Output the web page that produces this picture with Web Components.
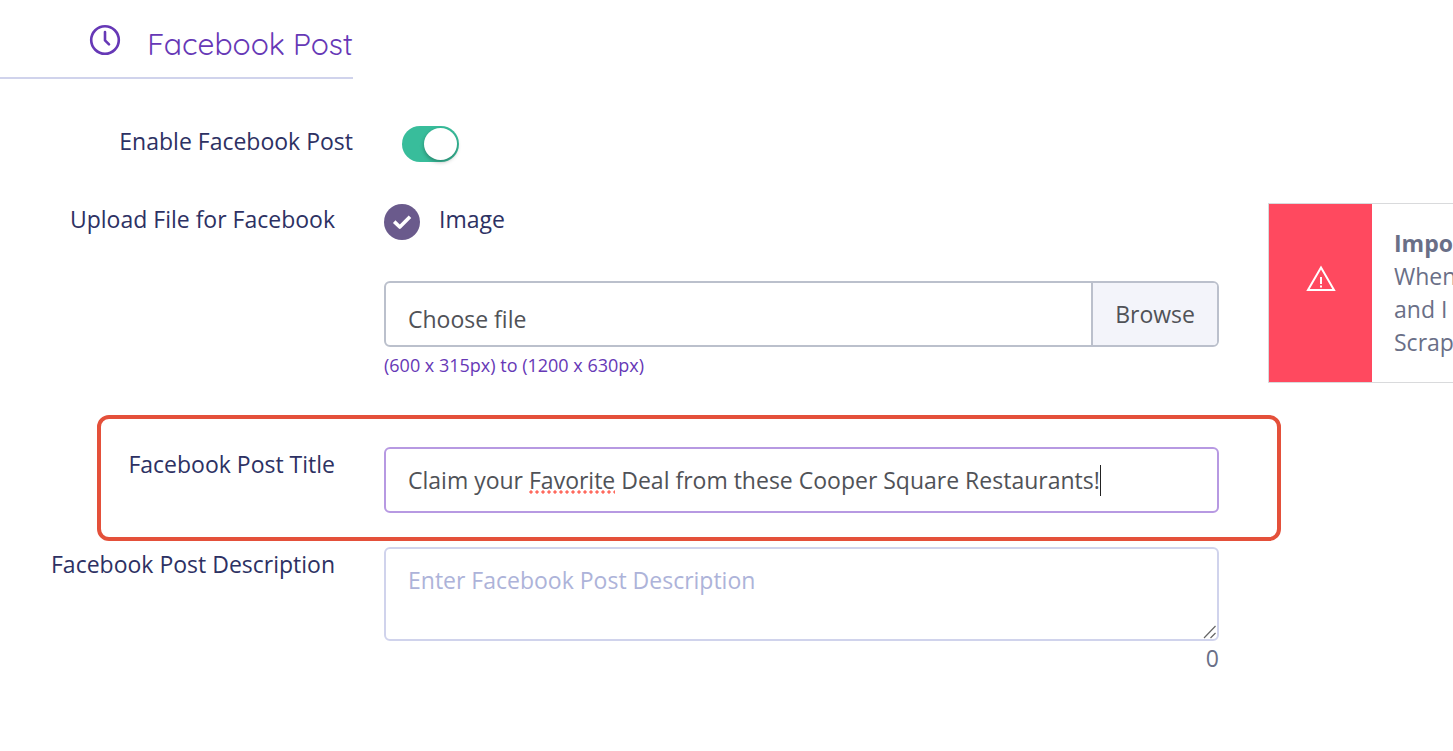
<!DOCTYPE html>
<html lang="en">
<head>
<meta charset="utf-8">
<meta name="viewport" content="width=device-width, initial-scale=1">
<title>Facebook Post</title>
<style>
  :root {
    --color-text: #2d3163;
    --color-input: #505257;
    --color-muted: #6a6f87;
    --color-primary: #6638b6;
    --color-line: #d0d3ec;
    --color-danger: #ff495f;
    --label-width: 335px;
    --gap: 49px;
  }
  body {
    margin: 0;
    overflow-x: hidden;
    background: #fff;
    color: var(--color-text);
    font-family: "Open Sans", "Noto Sans", sans-serif;
    font-size: 23px;
    line-height: 34px;
  }
</style>
</head>
<body>
<post-page>
  <section-heading>Facebook Post</section-heading>
  <toggle-row>Enable Facebook Post</toggle-row>
  <file-row option="Image" hint="(600 x 315px) to (1200 x 630px)">Upload File for Facebook</file-row>
  <title-row value="Claim your Favorite Deal from these Cooper Square Restaurants!" misspelled="Favorite">Facebook Post Title</title-row>
  <description-row placeholder="Enter Facebook Post Description">Facebook Post Description</description-row>
  <alert-note slot="aside">
    <strong>Important</strong><br>When<br>and I<br>Scrap
  </alert-note>
</post-page>

<script>
  // shared by every form row
  const rowStyle = /*CSS*/ `
    * { box-sizing: border-box; }
    :host { display: block; }
    .row {
      display: grid;
      grid-template-columns: var(--label-width) minmax(0, 1fr);
      column-gap: var(--gap);
      align-items: start;
    }
    .label { text-align: right; }
    input, textarea, button { font: inherit; margin: 0; }
  `;

  class PostPage extends HTMLElement {
    constructor() {
      super();
      this.attachShadow({ mode: "open" }).innerHTML = /*HTML*/ `
        <style>
          :host {
            display: grid;
            grid-template-columns: minmax(0, 1fr) 185px;
            column-gap: var(--gap);
          }
          aside { padding-top: 203px; min-width: 0; }
        </style>
        <main><slot></slot></main>
        <aside><slot name="aside"></slot></aside>
      `;
    }
  }

  class SectionHeading extends HTMLElement {
    constructor() {
      super();
      this.attachShadow({ mode: "open" }).innerHTML = /*HTML*/ `
        <style>
          :host {
            display: flex;
            justify-content: flex-end;
            box-sizing: border-box;
            width: calc(var(--label-width) + 18px);
            padding: 24px 0 13px;
            border-bottom: 2px solid var(--color-line);
            color: var(--color-primary);
            margin-bottom: 45px;
          }
          svg { width: 32px; height: 32px; margin-right: 26px; }
          h2 {
            margin: 0;
            font-family: Quicksand, Inter, sans-serif;
            font-size: 30px;
            font-weight: 400;
            line-height: 40px;
          }
        </style>
        <svg viewBox="0 0 32 32" fill="none" stroke="currentColor" stroke-width="2.6" stroke-linecap="round" stroke-linejoin="round" aria-hidden="true">
          <circle cx="16" cy="16" r="13.8"/>
          <path d="M16 8v8.4l4 4"/>
        </svg>
        <h2><slot></slot></h2>
      `;
    }
  }

  class ToggleRow extends HTMLElement {
    constructor() {
      super();
      this.attachShadow({ mode: "open" }).innerHTML = /*HTML*/ `
        <style>
          ${rowStyle}
          :host { margin-bottom: 40px; }
          .row { grid-template-columns: calc(var(--label-width) + 18px) minmax(0, 1fr); }
          input {
            appearance: none;
            display: block;
            width: 57px;
            height: 36px;
            margin-top: 2px;
            padding: 2px;
            border-radius: 18px;
            background: #38bd9b;
          }
          input::before {
            content: "";
            display: block;
            width: 33px;
            height: 32px;
            border-radius: 50%;
            background: #fff;
            box-shadow: 0 2px 4px rgba(0, 0, 0, 0.3);
          }
          input:checked::before { margin-left: auto; }
        </style>
        <div class="row">
          <label class="label" for="toggle"><slot></slot></label>
          <input id="toggle" type="checkbox" role="switch" checked>
        </div>
      `;
    }
  }

  class FileRow extends HTMLElement {
    connectedCallback() {
      this.attachShadow({ mode: "open" }).innerHTML = /*HTML*/ `
        <style>
          ${rowStyle}
          :host { margin-bottom: 68px; }
          .option {
            display: flex;
            gap: 19px;
            width: max-content;
            padding-top: 2px;
            margin-bottom: 41px;
          }
          .option span { margin-top: -2px; }
          .radio { display: grid; }
          .radio > * { grid-area: 1 / 1; }
          .radio input {
            appearance: none;
            width: 36px;
            height: 36px;
            border-radius: 50%;
            background: #6a5a8c;
          }
          .radio svg { width: 36px; height: 36px; pointer-events: none; }
          .file {
            display: flex;
            height: 66px;
            border: 2px solid #bbc0cc;
            border-radius: 6px;
            overflow: hidden;
            color: var(--color-input);
          }
          .file label { flex: 1; padding: 19px 22px 0; }
          .file button {
            padding: 0 22px;
            border: 0;
            border-left: 2px solid #bbc0cc;
            background: #f3f4fa;
            color: inherit;
          }
          .hint {
            padding-top: 4px;
            color: var(--color-primary);
            font-size: 18px;
            line-height: 28px;
          }
        </style>
        <div class="row">
          <label class="label" for="file"><slot></slot></label>
          <div>
            <label class="option">
              <div class="radio">
                <input type="radio" name="kind" checked>
                <svg viewBox="0 0 36 36" fill="none" stroke="#fff" stroke-width="3.6" stroke-linejoin="round" aria-hidden="true">
                  <path d="M10.2 17.6l5.6 5.4L26 12.8"/>
                </svg>
              </div>
              <span>${this.getAttribute("option")}</span>
            </label>
            <div class="file">
              <label for="file">Choose file</label>
              <input id="file" type="file" hidden>
              <button type="button">Browse</button>
            </div>
            <div class="hint">${this.getAttribute("hint")}</div>
          </div>
        </div>
      `;

      const input = this.shadowRoot.querySelector("#file");
      this.shadowRoot.querySelector("button").addEventListener("click", () => input.click());
    }
  }

  class TitleRow extends HTMLElement {
    connectedCallback() {
      this.attachShadow({ mode: "open" }).innerHTML = /*HTML*/ `
        <style>
          ${rowStyle}
          :host { position: relative; margin-bottom: 34px; }
          .highlight {
            position: absolute;
            inset: -32px -62px -28px 97px;
            border: 4px solid #e4503a;
            border-radius: 12px;
            pointer-events: none;
          }
          .field { position: relative; }
          input {
            display: block;
            width: 100%;
            height: 66px;
            padding: 0 22px;
            border: 2px solid #b799e2;
            border-radius: 6px;
            outline: none;
            color: var(--color-input);
            caret-color: transparent;
          }
          .spelling {
            position: absolute;
            top: 43px;
            height: 4px;
            background: radial-gradient(circle at 2px 2px, #ff6a5e 1.3px, transparent 2px) 0 0 / 6px 4px;
          }
          .caret {
            position: absolute;
            top: 18px;
            width: 1px;
            height: 31px;
            background: #222;
          }
        </style>
        <div class="row">
          <label class="label" for="title"><slot></slot></label>
          <div class="field">
            <input id="title" type="text" spellcheck="false">
            <span class="spelling"></span>
            <span class="caret"></span>
          </div>
        </div>
        <div class="highlight"></div>
      `;

      const input = this.shadowRoot.querySelector("input");
      input.value = this.getAttribute("value") || "";
      input.addEventListener("input", () => this.mark());
      this.mark();
    }

    // places the spelling dots and the caret from the measured text
    mark() {
      const input = this.shadowRoot.querySelector("input");
      const spelling = this.shadowRoot.querySelector(".spelling");
      const caret = this.shadowRoot.querySelector(".caret");
      const word = this.getAttribute("misspelled") || "";
      const at = input.value.indexOf(word);
      const style = getComputedStyle(input);
      const ctx = document.createElement("canvas").getContext("2d");
      ctx.font = `${style.fontSize} ${style.fontFamily}`;
      const width = (text) => Math.round(ctx.measureText(text).width);

      spelling.hidden = !word || at < 0;
      spelling.style.left = `${24 + width(input.value.slice(0, at))}px`;
      spelling.style.width = `${width(word)}px`;
      caret.style.left = `${24 + width(input.value)}px`;
    }
  }

  class DescriptionRow extends HTMLElement {
    connectedCallback() {
      this.attachShadow({ mode: "open" }).innerHTML = /*HTML*/ `
        <style>
          ${rowStyle}
          .field { position: relative; }
          textarea {
            display: block;
            width: 100%;
            height: 94px;
            padding: 14px 22px;
            border: 2px solid var(--color-line);
            border-radius: 6px;
            outline: none;
            resize: vertical;
            color: var(--color-input);
          }
          textarea::placeholder { color: #adb3d9; }
          textarea::-webkit-resizer { background: transparent; }
          .grip {
            position: absolute;
            right: 2px;
            bottom: 2px;
            width: 14px;
            height: 14px;
            pointer-events: none;
          }
          output { display: block; text-align: right; color: var(--color-muted); }
        </style>
        <div class="row">
          <label class="label" for="description"><slot></slot></label>
          <div>
            <div class="field">
              <textarea id="description" placeholder="${this.getAttribute("placeholder")}"></textarea>
              <svg class="grip" viewBox="0 0 14 14" stroke="#666" stroke-width="1.2" aria-hidden="true">
                <path d="M1 13L12.500 1M7.500 13l5-5"/>
              </svg>
            </div>
            <output for="description">0</output>
          </div>
        </div>
      `;

      const area = this.shadowRoot.querySelector("textarea");
      area.addEventListener("input", () => {
        this.shadowRoot.querySelector("output").textContent = area.value.length;
      });
    }
  }

  class AlertNote extends HTMLElement {
    constructor() {
      super();
      this.attachShadow({ mode: "open" }).innerHTML = /*HTML*/ `
        <style>
          :host {
            display: flex;
            border: 1px solid #d9dadc;
            border-right: 0;
            overflow: hidden;
            color: var(--color-muted);
            line-height: 33px;
          }
          .icon {
            flex: none;
            display: flex;
            justify-content: center;
            width: 103px;
            padding-top: 61px;
            box-sizing: border-box;
            background: var(--color-danger);
          }
          svg { width: 30px; height: 27px; }
          .text { padding: 23px 22px; white-space: nowrap; }
        </style>
        <div class="icon">
          <svg viewBox="0 0 30 27" fill="none" stroke="#fff" stroke-width="2" aria-hidden="true">
            <path d="M15 2.600L28 25H2z"/>
            <path d="M15 12v7M15 20.600v2"/>
          </svg>
        </div>
        <div class="text"><slot></slot></div>
      `;
    }
  }

  customElements.define("post-page", PostPage);
  customElements.define("section-heading", SectionHeading);
  customElements.define("toggle-row", ToggleRow);
  customElements.define("file-row", FileRow);
  customElements.define("title-row", TitleRow);
  customElements.define("description-row", DescriptionRow);
  customElements.define("alert-note", AlertNote);
</script>
</body>
</html>
